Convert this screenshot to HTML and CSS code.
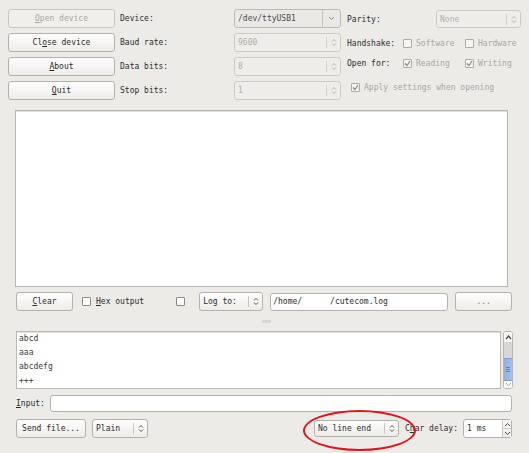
FILE: index.html
```html
<!DOCTYPE html>
<html>
<head>
<meta charset="utf-8">
<link rel="stylesheet" href="styles.css">
</head>
<body>
<div class="win">
  <div class="top">
    <div class="btncol">
      <button class="btn dis"><u>O</u>pen device</button>
      <button class="btn">Cl<u>o</u>se device</button>
      <button class="btn"><u>A</u>bout</button>
      <button class="btn"><u>Q</u>uit</button>
    </div>
    <div class="labcol">
      <div class="lab">Device:</div>
      <div class="lab">Baud rate:</div>
      <div class="lab">Data bits:</div>
      <div class="lab">Stop bits:</div>
    </div>
    <div class="combocol">
      <div class="combo dev"><span class="ctext">/dev/ttyUSB1</span><span class="carrow wide"><svg width="7" height="5" viewBox="0 0 7 5"><path d="M1 1 L3.5 3.5 L6 1" fill="none" stroke="#8a8680" stroke-width="1"/></svg></span></div>
      <div class="combo dis"><span class="ctext">9600</span><span class="carrow"><svg width="6" height="9" viewBox="0 0 6 9"><path d="M1 3.5 L3 1.5 L5 3.5 M1 5.5 L3 7.5 L5 5.5" fill="none" stroke="#b5b1ab" stroke-width="1"/></svg></span></div>
      <div class="combo dis"><span class="ctext">8</span><span class="carrow"><svg width="6" height="9" viewBox="0 0 6 9"><path d="M1 3.5 L3 1.5 L5 3.5 M1 5.5 L3 7.5 L5 5.5" fill="none" stroke="#b5b1ab" stroke-width="1"/></svg></span></div>
      <div class="combo dis"><span class="ctext">1</span><span class="carrow"><svg width="6" height="9" viewBox="0 0 6 9"><path d="M1 3.5 L3 1.5 L5 3.5 M1 5.5 L3 7.5 L5 5.5" fill="none" stroke="#b5b1ab" stroke-width="1"/></svg></span></div>
    </div>
    <div class="rightcol">
      <div class="rrow r1">
        <span class="rlab wide">Parity:</span>
        <div class="combo dis parity"><span class="ctext">None</span><span class="carrow"><svg width="6" height="9" viewBox="0 0 6 9"><path d="M1 3.5 L3 1.5 L5 3.5 M1 5.5 L3 7.5 L5 5.5" fill="none" stroke="#b5b1ab" stroke-width="1"/></svg></span></div>
      </div>
      <div class="rrow r2">
        <span class="rlab">Handshake:</span>
        <span class="chk dis"><span class="box"></span>Software</span>
        <span class="chk dis"><span class="box"></span>Hardware</span>
      </div>
      <div class="rrow r3">
        <span class="rlab">Open for:</span>
        <span class="chk dis"><span class="box"><svg width="7" height="7" viewBox="0 0 7 7"><path d="M1 3.5 L3 5.5 L6 1" fill="none" stroke="#8d8983" stroke-width="1.2"/></svg></span>Reading</span>
        <span class="chk dis"><span class="box"><svg width="7" height="7" viewBox="0 0 7 7"><path d="M1 3.5 L3 5.5 L6 1" fill="none" stroke="#8d8983" stroke-width="1.2"/></svg></span>Writing</span>
      </div>
      <div class="rrow r4">
        <span class="chk dis apply"><span class="box"><svg width="7" height="7" viewBox="0 0 7 7"><path d="M1 3.5 L3 5.5 L6 1" fill="none" stroke="#8d8983" stroke-width="1.2"/></svg></span>Apply settings when opening</span>
      </div>
    </div>
  </div>

  <div class="output"></div>

  <div class="logrow">
    <button class="btn clear"><u>C</u>lear</button>
    <span class="chk hex"><span class="box"></span><u>H</u>ex output</span>
    <span class="chk lone"><span class="box"></span></span>
    <div class="combo en logto"><span class="ctext">Log to:</span><span class="carrow"><svg width="6" height="9" viewBox="0 0 6 9"><path d="M1 3.5 L3 1.5 L5 3.5 M1 5.5 L3 7.5 L5 5.5" fill="none" stroke="#55524e" stroke-width="1"/></svg></span></div>
    <div class="field logfile">/home/<span class="gap"></span>/cutecom.log</div>
    <button class="btn dots">...</button>
  </div>

  <div class="splitter"><span class="grip"></span></div>

  <div class="listrow">
    <div class="list">
      <div>abcd</div>
      <div>aaa</div>
      <div>abcdefg</div>
      <div>+++</div>
    </div>
    <div class="sbar">
      <div class="sb-up"><svg width="7" height="5" viewBox="0 0 7 5"><path d="M1 4 L3.5 1 L6 4" fill="none" stroke="#444" stroke-width="1.2"/></svg></div>
      <div class="sb-track"></div>
      <div class="sb-thumb"><span></span><span></span><span></span></div>
      <div class="sb-down"><svg width="7" height="5" viewBox="0 0 7 5"><path d="M1 1 L3.5 4 L6 1" fill="none" stroke="#aaa" stroke-width="1"/></svg></div>
    </div>
  </div>

  <div class="inputrow">
    <span class="ilab"><u>I</u>nput:</span>
    <div class="field input"></div>
  </div>

  <div class="bottomrow">
    <button class="btn sendfile">Send file...</button>
    <div class="combo en plain"><span class="ctext">Plain</span><span class="carrow"><svg width="6" height="9" viewBox="0 0 6 9"><path d="M1 3.5 L3 1.5 L5 3.5 M1 5.5 L3 7.5 L5 5.5" fill="none" stroke="#55524e" stroke-width="1"/></svg></span></div>
    <div class="spacer"></div>
    <div class="combo en lineend"><span class="ctext">No line end</span><span class="carrow"><svg width="6" height="9" viewBox="0 0 6 9"><path d="M1 3.5 L3 1.5 L5 3.5 M1 5.5 L3 7.5 L5 5.5" fill="none" stroke="#55524e" stroke-width="1"/></svg></span></div>
    <span class="dlab">C<u>h</u>ar delay:</span>
    <div class="spin"><span class="stext">1 ms</span><span class="sarrows"><span class="sa"><svg width="7" height="5" viewBox="0 0 7 5"><path d="M1 4 L3.5 1.5 L6 4" fill="none" stroke="#444" stroke-width="1"/></svg></span><span class="sa"><svg width="7" height="5" viewBox="0 0 7 5"><path d="M1 1 L3.5 3.5 L6 1" fill="none" stroke="#444" stroke-width="1"/></svg></span></span></div>
  </div>

  <div class="annot"></div>
</div>
</body>
</html>
```

FILE: styles.css
```css
* { box-sizing: border-box; }
html, body { margin: 0; padding: 0; }
body {
  background: #edebe8;
  font-family: "DejaVu Sans Mono", monospace;
  font-size: 8px;
  color: #2b2b2b;
  width: 529px;
  height: 453px;
  overflow: hidden;
}
u { text-decoration: underline; text-underline-offset: 1px; }
.win { position: relative; width: 529px; height: 453px; }

.top {
  display: flex;
  padding: 9px 0 0 8px;
  height: 100px;
}
.top > div { flex-shrink: 0; }
.btncol, .labcol, .combocol { display: flex; flex-direction: column; gap: 5px; }
.btncol { width: 107px; }
.btn {
  font-family: inherit;
  font-size: 8px;
  color: #2b2b2b;
  height: 19px;
  padding: 0;
  border: 1px solid #b5b1ab;
  border-radius: 3px;
  background: linear-gradient(#fefefe, #eeece9);
  display: flex;
  align-items: center;
  justify-content: center;
}
.btncol .btn { width: 107px; }
.btn.dis { color: #aaa7a2; background: #f1efec; border-color: #c9c6c1; }
.labcol { width: 119px; padding-left: 5px; }
.lab { height: 19px; display: flex; align-items: center; }
.combocol { width: 107px; }

.combo {
  height: 19px;
  border: 1px solid #c3c0bb;
  border-radius: 3px;
  display: flex;
  align-items: center;
  background: #efedea;
  flex-shrink: 0;
}
.combo .ctext { flex: 1; padding-left: 3px; white-space: nowrap; overflow: hidden; }
.combo .carrow {
  width: 14px;
  height: 11px;
  border-left: 1px solid #d2cfca;
  display: flex; align-items: center; justify-content: center;
}
.combo .carrow.wide { width: 18px; height: 17px; border-left-color: #c6c3be; }
.combo.dev { background: #ebe9e6; color: #4a4a4a; border-color: #bdbab5; }
.combo.dis { color: #b0ada8; background: #efedea; border-color: #cdcac5; }
.combo.en { background: linear-gradient(#fefefe, #eeece9); border-color: #b5b1ab; color: #2b2b2b; }
.combo.en .carrow { border-left-color: #c9c6c1; }

.rightcol { display: flex; flex-direction: column; padding-left: 6px; width: 180px; }
.rrow { display: flex; align-items: center; height: 18px; }
.r1 { margin-top: 1px; }
.r2 { margin-top: 6px; }
.r3 { margin-top: 2px; }
.r4 { margin-top: 6px; }
.rlab { width: 56px; flex-shrink: 0; }
.rlab.wide { width: 89px; }
.parity { width: 85px; height: 18px; }

.chk { display: flex; align-items: center; white-space: nowrap; flex-shrink: 0; }
.chk .box {
  width: 9px; height: 9px;
  border: 1px solid #8d8983;
  background: #fff;
  margin-right: 4px;
  display: flex; align-items: center; justify-content: center;
  border-radius: 1px;
}
.chk.dis { color: #a9a6a1; }
.chk.dis .box { border-color: #aeaaa4; background: #f6f5f3; }
.r2 .chk, .r3 .chk { width: 62px; }
.apply { margin-left: 4px; }

.output {
  margin: 10px 0 0 15px;
  width: 493px;
  height: 177px;
  background: #fff;
  border: 1px solid #b9b5af;
  box-shadow: inset 0 1px 0 #e2e0dd;
}

.logrow {
  display: flex;
  align-items: center;
  margin: 5px 0 0 16px;
  height: 19px;
}
.logrow > * { flex-shrink: 0; }
.clear { width: 57px; }
.hex { margin-left: 9px; }
.hex .box { margin-right: 5px; }
.lone { margin-left: 32px; }
.lone .box { margin-right: 0; }
.logto { margin-left: 14px; width: 64px; }
.field {
  background: #fff;
  border: 1px solid #b5b1ab;
  border-radius: 3px;
  height: 18px;
  display: flex;
  align-items: center;
}
.logfile { margin-left: 7px; width: 178px; padding-left: 2px; color: #2b2b2b; }
.logfile .gap { display: inline-block; width: 28px; }
.dots { margin-left: 7px; width: 57px; color: #777; }

.splitter { height: 20px; display: flex; align-items: center; justify-content: center; padding-left: 4px; }
.grip {
  width: 9px; height: 3px;
  background-image: radial-gradient(circle, #c2bfba 0.6px, transparent 0.8px);
  background-size: 2px 2px;
}

.listrow { display: flex; margin-left: 16px; height: 58px; }
.list {
  width: 485px;
  height: 58px;
  background: #fff;
  border: 1px solid #bdb9b3;
  box-shadow: inset 0 1px 0 #e2e0dd;
  padding: 0 0 0 2px;
  line-height: 14px;
  color: #3a3a3a;
}
.sbar {
  margin-left: 2px;
  width: 10px;
  height: 58px;
  border: 1px solid #bab6b0;
  border-radius: 3px;
  display: flex;
  flex-direction: column;
  overflow: hidden;
  background: #fff;
}
.sb-up { height: 10px; display: flex; align-items: center; justify-content: center; background: #fbfbfa; }
.sb-track { height: 16px; background: #d9d7d3; }
.sb-thumb {
  height: 23px;
  background: linear-gradient(90deg, #8fb1e2, #a4c1ec);
  border-top: 1px solid #7d9fd3;
  border-bottom: 1px solid #7d9fd3;
  display: flex; flex-direction: column; align-items: center; justify-content: center; gap: 1px;
}
.sb-thumb span { width: 4px; height: 1px; background: #5e82bd; }
.sb-down { flex: 1; display: flex; align-items: center; justify-content: center; background: #fbfbfa; }

.inputrow { display: flex; align-items: center; margin: 6px 0 0 16px; height: 17px; }
.ilab { width: 34px; }
.input { width: 462px; height: 17px; }

.bottomrow { display: flex; align-items: center; margin: 7px 0 0 16px; height: 19px; width: 496px; }
.sendfile { width: 70px; }
.plain { margin-left: 6px; width: 56px; }
.spacer { flex: 1; }
.lineend { width: 85px; height: 17px; }
.dlab { margin-left: 6px; width: 58px; }
.spin {
  width: 49px; height: 19px;
  display: flex;
  background: #fff;
  border: 1px solid #b5b1ab;
  border-radius: 3px;
}
.stext { flex: 1; display: flex; align-items: center; padding-left: 3px; }
.sarrows { width: 9px; display: flex; flex-direction: column; border-left: 1px solid #c9c6c1; background: linear-gradient(#fefefe, #eeece9); }
.sa { flex: 1; display: flex; align-items: center; justify-content: center; }
.sa + .sa { border-top: 1px solid #d3d0cb; }

.annot {
  position: absolute;
  left: 303px; top: 410px;
  width: 113px; height: 41px;
  border: 2px solid #e0161c;
  border-radius: 50%;
  pointer-events: none;
}
```
